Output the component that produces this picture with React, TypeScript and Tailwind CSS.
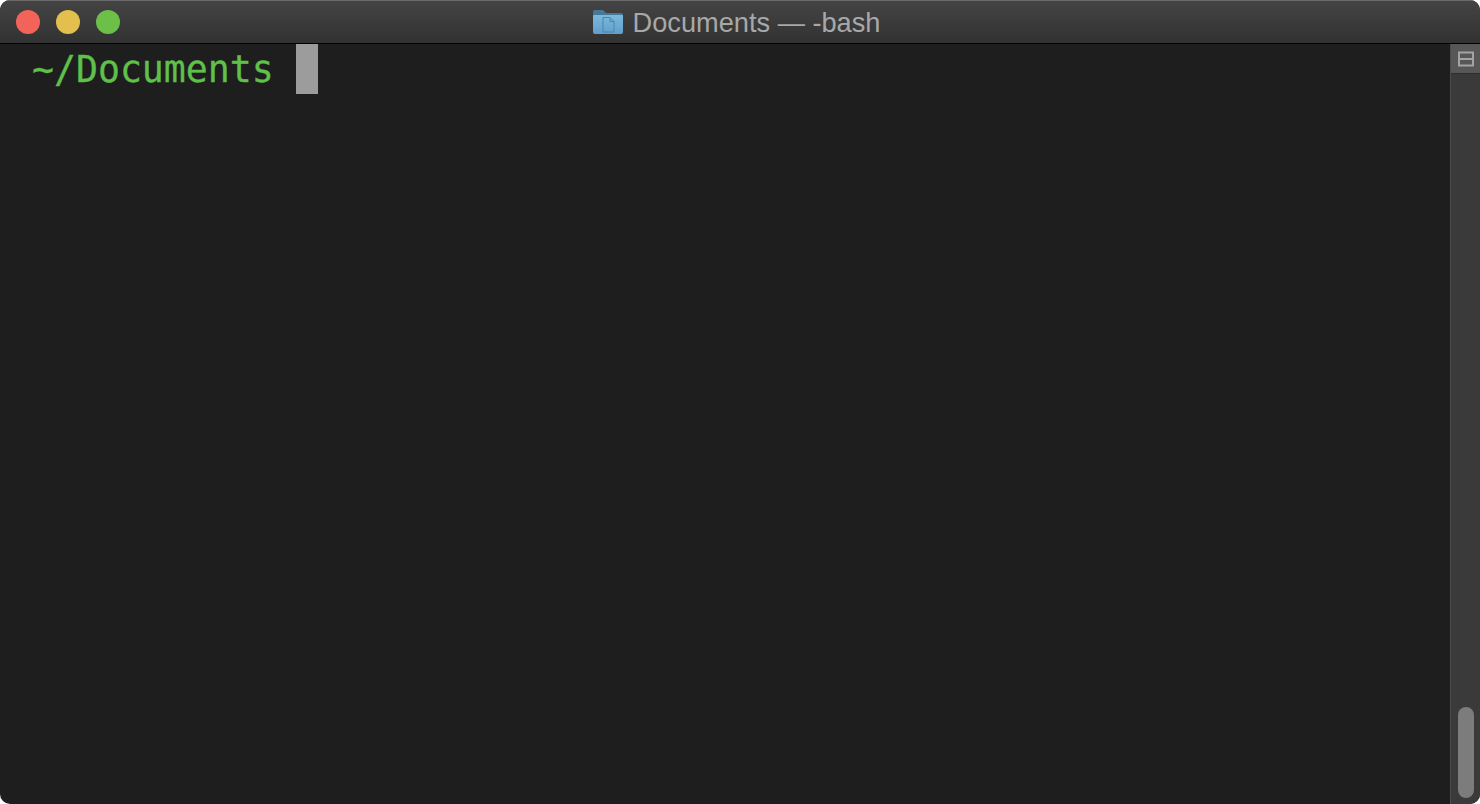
import React from 'react';

const FolderIcon = () => (
    <svg width="30" height="24" viewBox="0 0 30 24" className="shrink-0">
        <defs>
            <linearGradient id="folder-front" x1="0" y1="0" x2="0" y2="1">
                <stop offset="0" stopColor="#7cb9de" />
                <stop offset="1" stopColor="#5f9fc9" />
            </linearGradient>
        </defs>
        <path d="M0 2 Q0 0 2 0 L9 0 Q11 0 12 2 L13 3 L28 3 Q30 3 30 5 L30 10 L0 10 Z" fill="#44799c" />
        <path d="M0 6 Q0 5 1 5 L29 5 Q30 5 30 6 L30 22 Q30 24 28 24 L2 24 Q0 24 0 22 Z" fill="url(#folder-front)" />
        <path d="M10 7.5 L17 7.5 L21 11.5 L21 22 L10 22 Z M17 7.5 L17 11.5 L21 11.5" fill="none" stroke="#4a86ad" strokeWidth="1" />
    </svg>
);

const SplitIcon = () => (
    <svg width="16" height="16" viewBox="0 0 16 16">
        <path d="M1 1.5 H15 V14.5 H1 Z M1 8 H15" fill="none" stroke="#a3a3a3" strokeWidth="2" />
    </svg>
);

const TitleBar = () => (
    <div className="grid h-11 shrink-0 grid-cols-[1fr_auto_1fr] items-center border-t border-b border-t-[#6a6a6a] border-b-black bg-gradient-to-b from-[#444444] to-[#323232]">
        <div className="flex gap-4 pl-4">
            <div className="h-6 w-6 rounded-full bg-[#f2645a]" />
            <div className="h-6 w-6 rounded-full bg-[#e3c04d]" />
            <div className="h-6 w-6 rounded-full bg-[#6cc04a]" />
        </div>
        <div className="mr-[7px] flex items-center gap-[10px]">
            <FolderIcon />
            <span className="relative top-px text-[27.2px] leading-8 text-[#a8a8a8] [font-family:'Liberation_Sans',sans-serif]">Documents — -bash</span>
        </div>
        <div />
    </div>
);

const ScrollBar = () => (
    <div className="flex w-[30px] shrink-0 flex-col border-l border-[#4c4c4c] bg-[#3a3a3a]">
        <div className="flex h-[30px] items-center justify-center border-b border-[#2e2e2e] bg-[#575757]">
            <SplitIcon />
        </div>
        <div className="flex flex-1 flex-col justify-end pr-[6px] pb-[6px] pl-[7px]">
            <div className="h-[91px] rounded-full bg-[#7c7c7c]" />
        </div>
    </div>
);

export default function App() {
    return (
        <div className="h-[804px] w-[1480px] bg-white">
            <div className="flex h-full flex-col overflow-hidden rounded-[10px] bg-[#1e1e1e]">
                <TitleBar />
                <div className="flex min-h-0 flex-1">
                    <div className="flex-1 pl-8">
                        <div className="flex h-[50px] items-center whitespace-pre text-[36.5px] leading-[50px] text-[#5fc04a] [-webkit-text-stroke:0.3px_#5fc04a] [font-family:'DejaVu_Sans_Mono',monospace]">
                            <span className="relative top-px">~/Documents </span>
                            <span className="h-[50px] w-[22px] bg-[#9c9c9c]" />
                        </div>
                    </div>
                    <ScrollBar />
                </div>
            </div>
        </div>
    );
}
